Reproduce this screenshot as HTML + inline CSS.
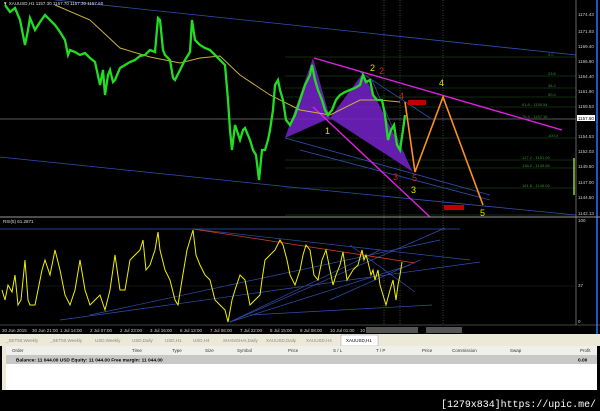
<!DOCTYPE html>
<html><head><meta charset="utf-8"><style>
html,body{margin:0;padding:0;background:#000;width:600px;height:411px;overflow:hidden;font-family:"Liberation Sans",sans-serif}
svg{position:absolute;left:0;top:0}
.t{font-size:4.5px;fill:#ddd}
.ax{font-size:4.5px;fill:#ccc}
.g{font-size:4px;fill:#3a8a3a}
</style></head><body>
<svg width="600" height="411" viewBox="0 0 600 411">
<rect width="600" height="411" fill="#000"/>
<g stroke="#1e5a1e" stroke-width="0.6">
<line x1="285" y1="57" x2="576" y2="57"/><line x1="285" y1="76" x2="576" y2="76"/><line x1="285" y1="88" x2="576" y2="88"/><line x1="285" y1="97" x2="576" y2="97"/><line x1="285" y1="107" x2="576" y2="107"/><line x1="285" y1="138" x2="576" y2="138"/><line x1="285" y1="160" x2="576" y2="160"/><line x1="285" y1="168" x2="576" y2="168"/><line x1="285" y1="188" x2="576" y2="188"/><line x1="285" y1="215" x2="576" y2="215"/>
</g>
<line x1="0" y1="119" x2="576" y2="119" stroke="#777" stroke-width="0.7"/>
<g class="g"><text x="548" y="56">0.0</text><text x="548" y="75">23.6</text><text x="548" y="87">38.2</text><text x="548" y="96">50.0</text><text x="522" y="106">61.8 - 1159.54</text><text x="522" y="118">76.4 - 1157.16</text><text x="548" y="137">100.0</text><text x="522" y="159">127.2 - 1151.09</text><text x="522" y="167">138.2 - 1149.56</text><text x="522" y="187">161.8 - 1146.06</text></g>
<g stroke="#888" stroke-width="0.5" stroke-dasharray="1,1.5"><line x1="384" y1="0" x2="384" y2="325"/><line x1="400" y1="0" x2="400" y2="325"/><line x1="443" y1="0" x2="443" y2="325"/></g>
<g stroke="#3050b0" stroke-width="0.8" fill="none">
<line x1="55" y1="0" x2="576" y2="55"/><line x1="0" y1="157" x2="300" y2="188"/><line x1="300" y1="188" x2="576" y2="215"/>
<line x1="285" y1="138" x2="490" y2="195"/><line x1="300" y1="150" x2="490" y2="200"/><line x1="360" y1="72" x2="430" y2="118"/><line x1="372" y1="80" x2="410" y2="168"/>
</g>
<polygon points="285,138 313,58 330,118 363,73 413,172 330,118" fill="#7020c0" opacity="0.9"/>
<line x1="314" y1="58" x2="562" y2="130" stroke="#e020e0" stroke-width="1.4"/>
<line x1="313" y1="107" x2="430" y2="217" stroke="#e020e0" stroke-width="1.4"/>
<polyline fill="none" stroke="#c8b040" stroke-width="1" points="55,5 90,20 120,48 150,57 180,63 200,58 220,56 240,75 270,95 300,110 330,115 360,100 380,100 400,102"/>
<polyline fill="none" stroke="#22dd22" stroke-width="2.3" points="5,5 10,12 15,8 20,20 25,45 28,30 30,18 35,30 40,22 45,15 50,20 55,25 60,32 65,40 68,55 70,50 75,52 80,55 85,53 90,58 95,62 100,85 103,70 105,95 108,75 110,70 113,82 115,80 120,68 125,65 130,62 135,60 140,56 145,55 150,50 155,52 158,18 160,20 163,50 165,55 170,60 173,78 175,80 180,70 185,60 190,52 192,20 195,40 200,45 205,48 210,50 215,55 220,60 225,65 228,100 230,130 232,150 235,125 240,140 243,130 245,128 250,140 253,150 256,155 259,180 262,150 265,150 268,140 270,130 273,110 275,85 278,80 280,90 283,100 286,120 290,125 295,115 300,100 305,85 310,75 312,65 315,80 318,90 322,100 325,110 328,115 332,110 336,100 340,95 345,92 350,90 355,88 360,85 363,75 366,82 370,80 373,95 377,100 382,100 385,115 388,140 391,130 394,125 397,145 400,150 403,130 405,115"/>
<polyline fill="none" stroke="#ff9020" stroke-width="1.6" points="405,102 415,172 443,97 483,205"/>
<rect x="408" y="100" width="18" height="5" fill="#c00000"/><rect x="444" y="205" width="20" height="5" fill="#c00000"/>
<g font-size="9" font-family="Liberation Sans"><text x="325" y="134" fill="#e0e000">1</text><text x="370" y="71" fill="#e0e000">2</text><text x="379" y="74" fill="#e02020">2</text><text x="399" y="99" fill="#e02020">4</text><text x="439" y="86" fill="#e0e000">4</text><text x="393" y="180" fill="#e02020">3</text><text x="412" y="181" fill="#e02020">5</text><text x="411" y="193" fill="#e0e000">3</text><text x="480" y="216" fill="#e0e000">5</text></g>
<text x="3" y="5" class="t">▼ XAUUSD,H1  1157.30 1157.70 1157.30 1157.60</text>
<line x1="576" y1="0" x2="576" y2="325" stroke="#aaa" stroke-width="0.6"/>
<line x1="597" y1="0" x2="597" y2="340" stroke="#3070ff" stroke-width="1.5"/>
<g class="ax"><text x="578" y="16">1174.43</text><text x="578" y="33">1171.93</text><text x="578" y="48">1169.40</text><text x="578" y="63">1166.90</text><text x="578" y="78">1164.40</text><text x="578" y="93">1161.90</text><text x="578" y="108">1159.53</text><text x="578" y="138">1154.53</text><text x="578" y="153">1152.03</text><text x="578" y="168">1149.50</text><text x="578" y="184">1147.00</text><text x="578" y="199">1144.50</text><text x="578" y="215">1142.13</text><text x="578" y="222">100</text><text x="578" y="287">37</text><text x="578" y="323">0</text></g>
<rect x="577" y="115" width="18" height="6" fill="#fff"/><text x="578" y="120" font-size="4.5" fill="#000">1157.60</text>
<line x1="574" y1="158" x2="574" y2="195" stroke="#9c3" stroke-width="1.5"/>
<line x1="0" y1="217" x2="600" y2="217" stroke="#999" stroke-width="1"/>
<text x="3" y="223" class="t">RSI(5) 61.2871</text>
<g stroke="#3050b0" stroke-width="0.7" fill="none">
<line x1="0" y1="229" x2="460" y2="229"/><line x1="193" y1="229" x2="470" y2="260"/><line x1="60" y1="320" x2="480" y2="262"/><line x1="90" y1="315" x2="440" y2="240"/><line x1="230" y1="322" x2="410" y2="265"/><line x1="230" y1="322" x2="445" y2="228"/><line x1="230" y1="322" x2="380" y2="250"/><line x1="250" y1="315" x2="432" y2="305"/><line x1="350" y1="245" x2="415" y2="292"/><line x1="330" y1="300" x2="420" y2="260"/>
</g>
<line x1="193" y1="229" x2="415" y2="263" stroke="#d04020" stroke-width="0.8"/>
<line x1="0" y1="286" x2="576" y2="286" stroke="#2a2a2a" stroke-width="0.5"/>
<polyline fill="none" stroke="#f0f000" stroke-width="1" points="2,290 5,300 8,285 12,292 15,275 18,305 21,300 25,260 28,300 30,305 35,305 38,290 42,270 45,260 50,275 55,250 60,270 65,295 70,305 75,290 80,260 85,290 90,305 95,300 100,295 105,310 110,290 115,255 120,290 125,290 130,260 135,255 140,250 143,240 146,270 150,265 155,250 158,232 160,250 165,270 170,280 175,300 178,305 182,280 187,250 190,240 193,230 196,255 200,265 205,275 210,280 215,300 220,305 225,310 228,322 232,300 235,290 240,275 245,280 250,305 255,300 260,295 262,280 265,260 270,255 275,250 280,240 283,245 287,260 290,275 295,285 300,270 303,255 306,245 310,250 314,275 318,280 322,260 326,250 330,270 333,285 336,275 340,265 343,252 347,280 350,275 353,270 358,265 362,250 364,260 366,255 368,262 371,275 373,270 375,280 378,270 380,285 383,295 386,305 390,290 393,280 396,300 398,285 400,275 402,262"/>
<line x1="0" y1="325" x2="600" y2="325" stroke="#888" stroke-width="0.6"/>
<g class="ax"><text x="2" y="332">30 Jun 2015</text><text x="32" y="332">30 Jun 21:00</text><text x="60" y="332">1 Jul 14:00</text><text x="90" y="332">2 Jul 07:00</text><text x="120" y="332">2 Jul 23:00</text><text x="150" y="332">3 Jul 16:00</text><text x="180" y="332">6 Jul 13:00</text><text x="210" y="332">7 Jul 06:00</text><text x="240" y="332">7 Jul 22:00</text><text x="270" y="332">8 Jul 15:00</text><text x="300" y="332">9 Jul 08:00</text><text x="330" y="332">10 Jul 01:00</text><text x="360" y="332">10</text></g>
<rect x="366" y="327" width="52" height="6" fill="#555"/><rect x="426" y="327" width="36" height="6" fill="#555"/>
<rect x="0" y="334" width="600" height="12" fill="#ece9d8"/>
<g font-size="4.5" fill="#888"><text x="6" y="342">_SET50,Weekly</text><text x="50" y="342">_SET50,Weekly</text><text x="95" y="342">USD,Weekly</text><text x="132" y="342">USD,Daily</text><text x="165" y="342">USD,H1</text><text x="193" y="342">USD,H4</text><text x="223" y="342">SHANGHAI,Daily</text><text x="266" y="342">XAUUSD,Daily</text><text x="306" y="342">XAUUSD,H4</text></g>
<rect x="341" y="335" width="37" height="11" fill="#fff" stroke="#999" stroke-width="0.5"/><text x="346" y="342" font-size="4.5" fill="#000">XAUUSD,H1</text>
<rect x="2" y="346" width="595" height="44" fill="#fff"/>
<rect x="6" y="346" width="591" height="9" fill="#f0f0ea"/>
<g font-size="4.5" fill="#333"><text x="12" y="352">Order</text><text x="132" y="352">Time</text><text x="172" y="352">Type</text><text x="205" y="352">Size</text><text x="237" y="352">Symbol</text><text x="288" y="352">Price</text><text x="333" y="352">S / L</text><text x="376" y="352">T / P</text><text x="422" y="352">Price</text><text x="452" y="352">Commission</text><text x="510" y="352">Swap</text><text x="580" y="352">Profit</text></g>
<rect x="6" y="355" width="591" height="9" fill="#c8c8c8"/>
<text x="16" y="361.5" font-size="4.8" font-weight="bold" fill="#000">Balance: 11 044.00 USD  Equity: 11 044.00  Free margin: 11 044.00</text>
<text x="578" y="361.5" font-size="4.8" font-weight="bold" fill="#000">0.00</text>
<rect x="2" y="346" width="4" height="44" fill="#ece9d8"/>
<text x="441" y="407" font-size="10" fill="#fff" font-family="Liberation Mono" textLength="155" lengthAdjust="spacingAndGlyphs">[1279x834]https://upic.me/</text>
</svg>
</body></html>
